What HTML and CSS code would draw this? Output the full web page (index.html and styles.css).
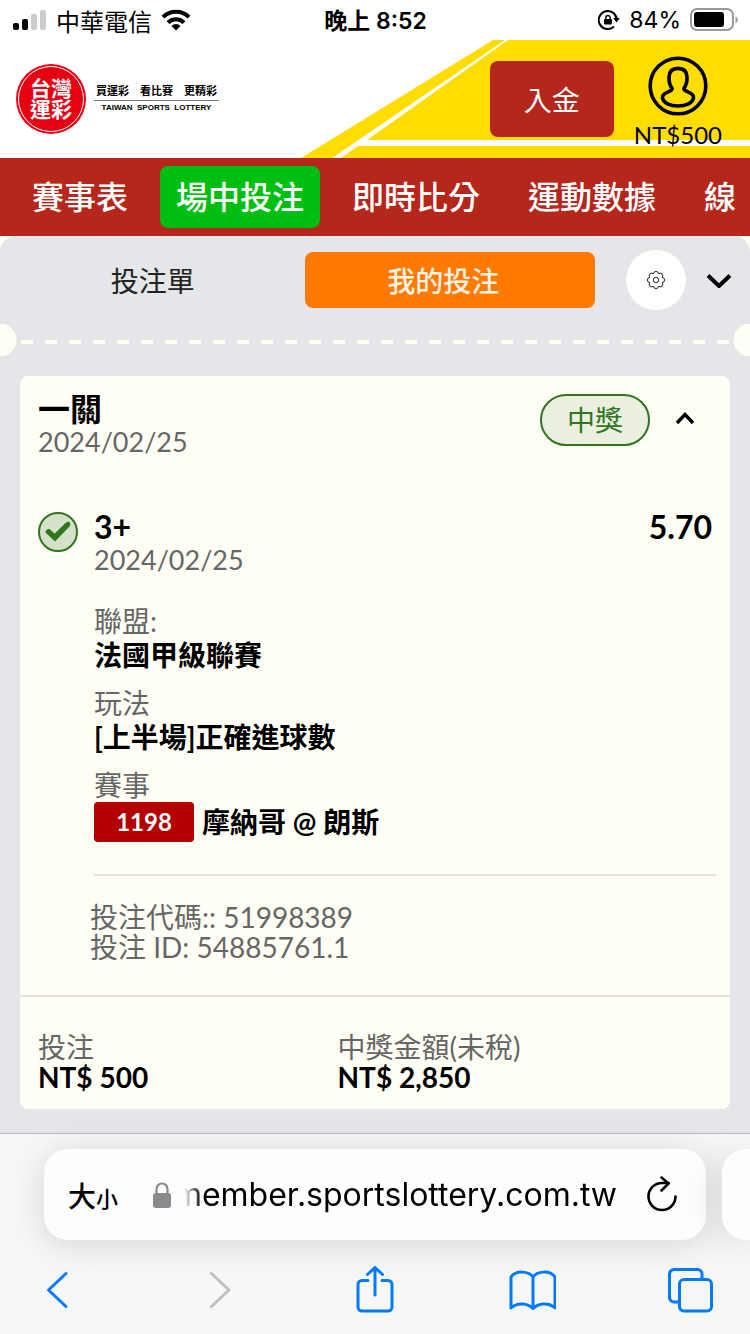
FILE: index.html
```html
<!DOCTYPE html>
<html lang="zh-Hant">
<head>
<meta charset="utf-8">
<meta name="viewport" content="width=device-width, initial-scale=1">
<title>台灣運彩</title>
<link rel="stylesheet" href="styles.css">
</head>
<body>
<div class="screen">
  <div class="status">
    <div class="status-left">
      <svg width="34" height="22" viewBox="0 0 34 22" aria-hidden="true">
        <rect x="0" y="14" width="6" height="7" rx="2"/>
        <rect x="9" y="10" width="6" height="11" rx="2"/>
        <rect x="18" y="5" width="6" height="16" rx="2" fill="#ccc"/>
        <rect x="27" y="1" width="6" height="20" rx="2" fill="#ccc"/>
      </svg>
      <span class="carrier">中華電信</span>
      <svg width="30" height="22" viewBox="0 0 30 22" fill="none" stroke="#000" stroke-width="4" aria-hidden="true">
        <path d="M2 8.2a18.500 18.500 0 0 1 26 0"/>
        <path d="M7 13.600a11.500 11.500 0 0 1 16 0"/>
        <path d="M15 21.500l-4.600-4.600a6.500 6.500 0 0 1 9.200 0z" fill="#000" stroke="none"/>
      </svg>
    </div>
    <div class="clock">晚上 8:52</div>
    <div class="status-right">
      <svg width="22" height="20" viewBox="0 0 22 20" fill="none" stroke="#000" stroke-width="2" aria-hidden="true">
        <path d="M18.600 8.500A9 9 0 1 0 16 16.500"/>
        <path d="M15.200 8h6.600l-3.300 4.500z" fill="#000" stroke="none"/>
        <rect x="6" y="9" width="8" height="5.500" rx="1" fill="#000" stroke="none"/>
        <path d="M7.800 9.500V7.700a2.200 2.200 0 0 1 4.400 0v1.800" stroke-width="1.400"/>
      </svg>
      <span class="battery-text">84%</span>
      <svg width="48" height="24" viewBox="0 0 48 24" aria-hidden="true">
        <rect x="1" y="1" width="42" height="21" rx="6" fill="none" stroke="#999" stroke-width="2"/>
        <rect x="4" y="4" width="30" height="15" rx="3"/>
        <path d="M45.500 8.500c3 1 3 5.500 0 6.500z" fill="#999"/>
      </svg>
    </div>
  </div>

  <header class="header">
    <svg class="header-art" width="450" height="118" viewBox="0 0 450 118" aria-hidden="true">
      <g fill="#ffdd00">
        <path d="M193 0H205L32 118H1z"/>
        <path d="M208 0H450V100H67z"/>
        <path d="M58 106H450V118H41z"/>
      </g>
    </svg>
    <a class="brand" href="#">
      <span class="seal"><span class="seal-ring">台灣<br>運彩</span></span>
      <span class="slogan">
        <span class="slogan-zh"><span>買運彩</span><span>看比賽</span><span>更精彩</span></span>
        <span class="slogan-en">TAIWAN&nbsp; SPORTS&nbsp; LOTTERY</span>
      </span>
    </a>
    <button class="deposit" type="button">入金</button>
    <a class="account" href="#">
      <svg width="60" height="60" viewBox="0 0 60 60" fill="none" stroke="#000" stroke-width="3.600" aria-hidden="true">
        <circle cx="30" cy="30" r="27.800"/>
        <path d="M24.200 32.500C21.500 29 20.800 25.500 21 21c.2-6 3.500-8.600 9-8.600s8.800 2.600 9 8.600c.2 4.500-.5 8-3.200 11.500.2 2 2.500 2.700 5 3.800 3.800 1.600 5 3.700 4.700 5.700C44.800 46.800 38 50 30 50s-14.800-3.200-15.500-8c-.3-2 .9-4.100 4.700-5.700 2.500-1.100 4.800-1.800 5-3.800z" stroke-linejoin="round"/>
      </svg>
      <span class="balance">NT$500</span>
    </a>
  </header>

  <nav class="nav">
    <a href="#">賽事表</a>
    <a class="current" href="#">場中投注</a>
    <a href="#">即時比分</a>
    <a href="#">運動數據</a>
    <a href="#">線</a>
  </nav>

  <main class="slip">
    <div class="tabs">
      <button class="tab" type="button">投注單</button>
      <button class="tab selected" type="button">我的投注</button>
      <button class="gear" type="button" aria-label="設定">
        <svg width="18" height="18" viewBox="0 0 18 18" fill="none" stroke="#222" stroke-width="1" aria-hidden="true">
          <circle cx="9" cy="9" r="2.600"/>
          <path d="M7 1.200Q9-.4 11 1.200l.5 1.600 1.600-.7q2.600.2 2.800 2.800l-.7 1.600 1.600.5q1.600 2 0 4l-1.600.5.7 1.600q-.2 2.600-2.800 2.800l-1.600-.7-.5 1.600q-2 1.600-4 0l-.5-1.600-1.600.7q-2.600-.2-2.800-2.800l.7-1.600L1.200 11q-1.600-2 0-4l1.600-.5-.7-1.600Q2.300 2.300 4.900 2.100l1.600.7z" stroke-linejoin="round"/>
        </svg>
      </button>
      <button class="icon-button" type="button" aria-label="收合">
        <svg width="26" height="16" viewBox="0 0 26 16" fill="none" stroke="#000" stroke-width="4" aria-hidden="true"><path d="M2 3.500l11 10.500 11-10.500"/></svg>
      </button>
    </div>
    <div class="tear"></div>

    <article class="card">
      <div class="card-head">
        <div>
          <h2 class="title">一關</h2>
          <div class="date">2024/02/25</div>
        </div>
        <span class="won">中獎</span>
        <button class="icon-button" type="button" aria-label="收起">
          <svg width="20" height="14" viewBox="0 0 20 14" fill="none" stroke="#000" stroke-width="3.400" aria-hidden="true"><path d="M2 12l8-8.500 8 8.500"/></svg>
        </button>
      </div>

      <section class="leg">
        <svg class="tick" width="40" height="40" viewBox="0 0 40 40" fill="none" stroke="#2f761e" aria-hidden="true">
          <circle cx="20" cy="20" r="19" fill="#d5e1ca" stroke-width="2"/>
          <path d="M8.500 18c1.500-1.500 3.500-1 4.500.3l3.500 3.500 11-10.800c1.800-1.500 4-1.500 4.500-.2s.3 2.900-.5 3.700L17 29.500 8.200 21.200c-.9-.9-.8-2.200.3-3.200z" fill="#2f761e" stroke="none"/>
        </svg>
        <div class="leg-body">
          <div class="pick"><h3 class="title">3+</h3><span class="odds">5.70</span></div>
          <div class="date">2024/02/25</div>
          <dl class="facts">
            <div><dt>聯盟:</dt><dd>法國甲級聯賽</dd></div>
            <div><dt>玩法</dt><dd>[上半場]正確進球數</dd></div>
            <div><dt>賽事</dt><dd class="match"><span class="code">1198</span>摩納哥 @ 朗斯</dd></div>
          </dl>
        </div>
      </section>

      <div class="reference">
        <div>投注代碼:: 51998389</div>
        <div>投注 ID: 54885761.1</div>
      </div>

      <dl class="totals">
        <div><dt>投注</dt><dd>NT$ 500</dd></div>
        <div><dt>中獎金額(未稅)</dt><dd>NT$ 2,850</dd></div>
      </dl>
    </article>
  </main>

  <footer class="browser">
    <div class="address-row">
      <div class="address">
        <button class="text-size" type="button">大<small>小</small></button>
        <svg width="20" height="28" viewBox="0 0 20 28" aria-hidden="true">
          <rect x="1" y="12" width="18" height="15" rx="3" fill="#89898e"/>
          <path d="M4.500 13V8a5.500 5.500 0 0 1 11 0v5" fill="none" stroke="#89898e" stroke-width="2.200"/>
        </svg>
        <button class="url" type="button"><span>member.sportslottery.com.tw</span></button>
        <button class="icon-button" type="button" aria-label="重新載入">
          <svg width="32" height="38" viewBox="0 0 32 38" fill="none" stroke="#000" stroke-width="2.600" stroke-linecap="round" stroke-linejoin="round" aria-hidden="true">
            <path d="M29.500 20.500A13.500 13.500 0 1 1 16 7h6.500"/>
            <path d="M15.500 1.500l7 6-7 7"/>
          </svg>
        </button>
      </div>
      <div class="next-tab"></div>
    </div>
    <div class="toolbar">
      <button class="icon-button" type="button" aria-label="上一頁">
        <svg width="48" height="48" viewBox="0 0 48 48" aria-hidden="true"><path d="M32 7.500L14.500 24 32 40.500"/></svg>
      </button>
      <button class="icon-button" type="button" aria-label="下一頁" disabled>
        <svg width="48" height="48" viewBox="0 0 48 48" aria-hidden="true"><path d="M19.500 7.500L37 24 19.500 40.500"/></svg>
      </button>
      <button class="icon-button" type="button" aria-label="分享">
        <svg width="48" height="48" viewBox="0 0 48 48" aria-hidden="true"><path d="M18 14.500h-6a4 4 0 0 0-4 4V41a4 4 0 0 0 4 4h26a4 4 0 0 0 4-4V18.500a4 4 0 0 0-4-4h-6M25 29V2M17.500 8.500L25 1.500l7.500 7"/></svg>
      </button>
      <button class="icon-button" type="button" aria-label="書籤">
        <svg width="48" height="48" viewBox="0 0 48 48" aria-hidden="true"><path d="M25 11C21 5 8 4 3 11v31c6-6 17-5 22 .5 5-5.500 16-6.500 22-.5V11C42 4 29 5 25 11zM25 11v31"/></svg>
      </button>
      <button class="icon-button" type="button" aria-label="分頁">
        <svg width="48" height="48" viewBox="0 0 48 48" aria-hidden="true"><path d="M13 36H8a4.500 4.500 0 0 1-4.500-4.500V8A4.500 4.500 0 0 1 8 3.500h23.500A4.500 4.500 0 0 1 36 8v5"/><rect x="13.500" y="13.500" width="32" height="31.500" rx="4.500"/></svg>
      </button>
    </div>
  </footer>
</div>
</body>
</html>
```

FILE: styles.css
```css
* {
  box-sizing: border-box;
}

body {
  margin: 0;
  background: #fffef5;
  color: #000;
  font-family: Lato, "Noto Sans CJK TC", sans-serif;
  font-size: 28px;
}

h2, h3, dl, dd {
  margin: 0;
}

a {
  color: inherit;
  text-decoration: none;
}

button {
  margin: 0;
  padding: 0;
  border: 0;
  background: none;
  color: inherit;
  font: inherit;
}

svg {
  display: block;
  flex: none;
}

.screen {
  display: flex;
  flex-direction: column;
  min-height: 100vh;
  overflow: hidden;
}

/* Status bar */
.status {
  display: grid;
  grid-template-columns: 1fr auto 1fr;
  align-items: center;
  height: 40px;
  padding: 0 12px 0 13px;
  background: #fff;
  font-family: Inter, "Noto Sans CJK TC", sans-serif;
  font-size: 23px;
}

.status-left,
.status-right {
  display: flex;
  align-items: center;
  gap: 9px;
}

.status-right {
  justify-content: flex-end;
}

.carrier {
  font-size: 24px;
}

.clock {
  padding-bottom: 2px;
  font-weight: 600;
}

/* Site header */
.header {
  position: relative;
  display: flex;
  align-items: center;
  height: 118px;
  padding: 0 28px 0 16px;
  background: #fff;
}

.header-art {
  position: absolute;
  top: 0;
  right: 0;
}

.brand,
.deposit,
.account {
  position: relative;
}

.brand {
  display: flex;
  align-items: center;
  gap: 8px;
  margin-right: auto;
}

.seal {
  padding: 2px;
  border-radius: 50%;
  background: #e60012;
}

.seal-ring {
  display: grid;
  place-content: center;
  width: 66px;
  height: 66px;
  padding-bottom: 3px;
  border: 1px solid #fff;
  border-radius: 50%;
  color: #fff;
  font-size: 21px;
  font-weight: 700;
  line-height: 21px;
}

.slogan {
  display: grid;
  width: 125px;
  padding-bottom: 2px;
}

.slogan-zh {
  display: flex;
  justify-content: space-between;
  padding: 0 2px 1px;
  border-bottom: 1px solid #777;
  font-size: 11px;
  font-weight: 700;
  line-height: 16px;
}

.slogan-en {
  padding-top: 1px;
  font-family: "Liberation Sans", sans-serif;
  font-size: 8px;
  font-weight: 700;
  line-height: 12px;
  text-align: center;
}

.deposit {
  width: 124px;
  height: 76px;
  margin-right: 20px;
  border-radius: 8px;
  background: #b5261b;
  color: #fff;
}

.account {
  display: flex;
  flex-direction: column;
  align-items: center;
  padding-top: 12px;
}

.balance {
  font-size: 24px;
  line-height: 38px;
}

/* Section navigation */
.nav {
  display: flex;
  gap: 16px;
  padding: 8px 0 8px 16px;
  overflow: hidden;
  background: #b5261b;
  color: #fff;
  font-size: 32px;
  font-weight: 500;
  white-space: nowrap;
}

.nav a {
  flex: none;
  padding: 0 16px;
  border-radius: 8px;
  line-height: 62px;
}

.nav .current {
  background: #00be12;
}

/* Bet slip */
.slip {
  flex: 1;
  padding-bottom: 24px;
  border-radius: 16px 16px 0 0;
  background: #e4e6e9;
}

.tabs {
  display: grid;
  grid-template-columns: 1fr 1fr 60px 38px;
  align-items: center;
  column-gap: 8px;
  padding: 14px 18px 14px 0;
}

.tab {
  height: 56px;
  margin-left: 8px;
  color: #222;
}

.tab.selected {
  margin: 0 23px 0 0;
  padding-right: 14px;
  border-radius: 8px;
  background: #ff7a00;
  color: #fff2e6;
  font-weight: 500;
}

.gear {
  display: grid;
  place-items: center;
  height: 60px;
  border-radius: 50%;
  background: #fff;
}

.tabs {
  grid-template-columns: 297fr 312fr 60px 38px;
}

.icon-button {
  display: grid;
  place-items: center;
}

.tabs .icon-button {
  justify-content: end;
}

.tear {
  height: 32px;
  background:
    radial-gradient(circle at 0 50%, #fffef5 16px, transparent 17px),
    radial-gradient(circle at 100% 50%, #fffef5 16px, transparent 17px),
    repeating-linear-gradient(90deg, #fffef5 0 12px, transparent 12px 24px) 21px 16px / calc(100% - 42px) 4px no-repeat;
}

.card {
  margin: 20px 20px 0;
  border-radius: 8px;
  background: #fffef5;
}

.card-head {
  display: grid;
  grid-template-columns: 1fr 110px 70px;
  padding: 16px 10px 0 18px;
}

.title,
.odds {
  font-size: 32px;
  font-weight: 700;
  line-height: 34px;
}

.date {
  color: #666;
  font-size: 27px;
  line-height: 32px;
}

.won {
  height: 52px;
  margin-top: 2px;
  border: 2px solid #2f761e;
  border-radius: 26px;
  background: #ebefdf;
  color: #2f761e;
  line-height: 48px;
  text-align: center;
}

.card-head .icon-button {
  height: 52px;
}

.leg {
  display: flex;
  gap: 16px;
  padding: 52px 14px 0 18px;
}

.tick {
  margin-top: 2px;
}

.leg-body {
  flex: 1;
  padding-bottom: 32px;
  border-bottom: 2px solid #e5e2dc;
}

.pick {
  display: flex;
  justify-content: space-between;
  padding-right: 4px;
}

.facts {
  display: grid;
  gap: 14px;
  padding-top: 28px;
  line-height: 34px;
}

dt,
.reference {
  color: #666;
}

dd {
  font-weight: 700;
}

.match {
  display: flex;
  align-items: center;
  gap: 8px;
}

.code {
  width: 100px;
  border-radius: 4px;
  background: #b30000;
  color: #fff;
  font-size: 24px;
  line-height: 40px;
  text-align: center;
}

.reference {
  padding: 26px 18px 33px 70px;
  border-bottom: 2px solid #e5e2dc;
  line-height: 30px;
}

.totals {
  display: grid;
  grid-template-columns: 4fr 5fr;
  padding: 35px 18px 17px;
  line-height: 30px;
}

/* Browser chrome */
.browser {
  border-top: 1px solid #b8b9bb;
  background: #f7f7f6;
  font-family: Inter, "Noto Sans CJK TC", sans-serif;
}

.address-row {
  display: flex;
  gap: 16px;
  padding: 15px 0 0 44px;
}

.address,
.next-tab {
  height: 91px;
  background: #fdfdfd;
  box-shadow: 0 4px 36px rgba(0, 0, 0, 0.14);
}

.address {
  display: flex;
  flex: 1;
  align-items: center;
  padding: 0 28px 0 24px;
  border-radius: 24px;
}

.next-tab {
  width: 28px;
  border-radius: 24px 0 0 24px;
}

.text-size {
  margin-right: 34px;
  font-weight: 500;
}

.text-size small {
  font-size: 22px;
}

.url {
  display: flex;
  flex: 1;
  justify-content: flex-end;
  min-width: 0;
  margin: 0 29px 0 12px;
  overflow: hidden;
  font-size: 32px;
  line-height: 44px;
  white-space: nowrap;
  mask-image: linear-gradient(90deg, transparent, #000 18px);
}

.toolbar {
  display: flex;
  justify-content: space-between;
  padding: 26px 36px 20px 34px;
  color: #007aff;
}

.toolbar svg {
  fill: none;
  stroke: currentColor;
  stroke-width: 3;
  stroke-linecap: round;
  stroke-linejoin: round;
}

.toolbar button:disabled {
  color: #bfbfbf;
}
```
